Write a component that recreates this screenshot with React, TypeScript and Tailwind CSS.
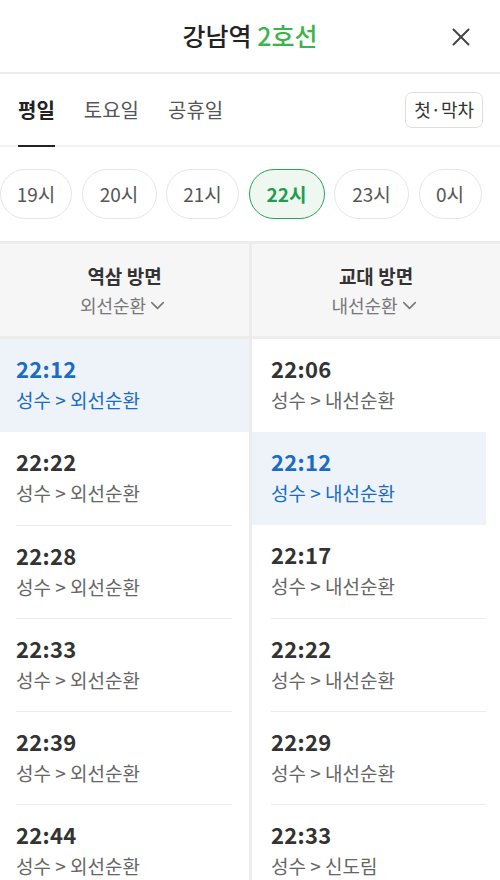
import { X, ChevronDown } from "lucide-react"

const hours = [
  { h: "19시", w: "w-[72px]" },
  { h: "20시", w: "w-[75px]" },
  { h: "21시", w: "w-[73px]" },
  { h: "22시", w: "w-[76px]" },
  { h: "23시", w: "w-[75px]" },
  { h: "0시", w: "w-[63px]" },
]

const left = [
  { t: "22:12", d: "성수 > 외선순환", on: true },
  { t: "22:22", d: "성수 > 외선순환" },
  { t: "22:28", d: "성수 > 외선순환" },
  { t: "22:33", d: "성수 > 외선순환" },
  { t: "22:39", d: "성수 > 외선순환" },
  { t: "22:44", d: "성수 > 외선순환" },
]

const right = [
  { t: "22:06", d: "성수 > 내선순환" },
  { t: "22:12", d: "성수 > 내선순환", on: true },
  { t: "22:17", d: "성수 > 내선순환" },
  { t: "22:22", d: "성수 > 내선순환" },
  { t: "22:29", d: "성수 > 내선순환" },
  { t: "22:33", d: "성수 > 신도림" },
]

type Row = { t: string; d: string; on?: boolean }

function TimeRow({ row, first, inset }: { row: Row; first: boolean; inset: string }) {
  return (
    <div className={row.on ? "h-[93px] bg-[#eef3f9]" : "h-[93px]"}>
      <div className={`h-full ${inset} ${first || row.on ? "" : "border-t border-[#ececec]"}`}>
        <div className="pt-[14px]">
          <div
            className={`text-[22px] font-bold leading-[30px] tracking-[0.3px] ${row.on ? "text-[#1a6cc4]" : "text-[#333]"}`}
          >
            {row.t}
          </div>
          <div
            className={`mt-[3px] text-[19px] leading-[28px] ${row.on ? "text-[#1a6cc4]" : "text-[#666]"}`}
          >
            {row.d}
          </div>
        </div>
      </div>
    </div>
  )
}

export default function App() {
  return (
    <div
      className="h-[880px] w-[500px] overflow-hidden bg-white"
      style={{ fontFamily: '"Noto Sans CJK KR", "Noto Sans", sans-serif' }}
    >
      {/* Header */}
      <div className="relative flex h-[74px] items-center justify-center border-b-2 border-[#ececec]">
        <div className="text-[25px] font-medium text-[#222]">
          강남역 <span className="text-[#3db34c]">2호선</span>
        </div>
        <button className="absolute right-[24px] top-[22px] text-[#444]">
          <X size={30} strokeWidth={1.6} />
        </button>
      </div>

      {/* Day tabs */}
      <div className="flex h-[73px] items-stretch border-b-2 border-[#f2f2f2] pl-[18px] pr-[17px]">
        <div className="flex items-stretch gap-[29px]">
          <div className="relative flex items-center text-[20px] font-bold text-[#222]">
            평일
            <div className="absolute bottom-[-2px] left-0 right-0 h-[2px] bg-[#222]" />
          </div>
          <div className="flex items-center text-[20px] text-[#555]">토요일</div>
          <div className="flex items-center text-[20px] text-[#555]">공휴일</div>
        </div>
        <div className="ml-auto flex items-center">
          <button className="h-[36px] rounded-[7px] border border-[#dedede] px-[8px] text-[18px] text-[#333]">
            첫·막차
          </button>
        </div>
      </div>

      {/* Hour chips */}
      <div className="flex h-[94px] items-center gap-[9.5px]">
        {hours.map(({ h, w }) => {
          const on = h === "22시"
          return (
            <div
              key={h}
              className={
                on
                  ? `flex h-[50px] ${w} shrink-0 items-center justify-center rounded-full border-[1.5px] border-[#27a35a] bg-[#eef8f1] text-[19px] font-bold text-[#1f9c50]`
                  : `flex h-[50px] ${w} shrink-0 items-center justify-center rounded-full border border-[#e6e6e6] text-[19px] text-[#555]`
              }
            >
              {h}
            </div>
          )
        })}
      </div>

      {/* Direction headers */}
      <div className="flex h-[98px] border-y-[3px] border-[#ececec] bg-[#f6f6f6]">
        <div className="flex w-[252px] flex-col items-center justify-center border-r-[3px] border-[#ececec]">
          <div className="text-[19px] font-bold leading-[28px] text-[#333]">역삼 방면</div>
          <div className="mt-[2px] flex items-center text-[18px] leading-[26px] text-[#777]">
            외선순환
            <ChevronDown size={23} strokeWidth={1.6} />
          </div>
        </div>
        <div className="flex flex-1 flex-col items-center justify-center">
          <div className="text-[19px] font-bold leading-[28px] text-[#333]">교대 방면</div>
          <div className="mt-[2px] flex items-center text-[18px] leading-[26px] text-[#777]">
            내선순환
            <ChevronDown size={23} strokeWidth={1.6} />
          </div>
        </div>
      </div>

      {/* Timetable */}
      <div className="flex">
        <div className="w-[252px] border-r-[3px] border-[#ececec]">
          {left.map((r, i) => (
            <TimeRow
              key={i}
              row={r}
              first={i === 0 || left[i - 1].on === true}
              inset="ml-[16px] mr-[17px]"
            />
          ))}
        </div>
        <div className="flex-1 pr-[14px]">
          {right.map((r, i) => (
            <TimeRow
              key={i}
              row={r}
              first={i === 0 || right[i - 1].on === true}
              inset="ml-[19px]"
            />
          ))}
        </div>
      </div>
    </div>
  )
}
